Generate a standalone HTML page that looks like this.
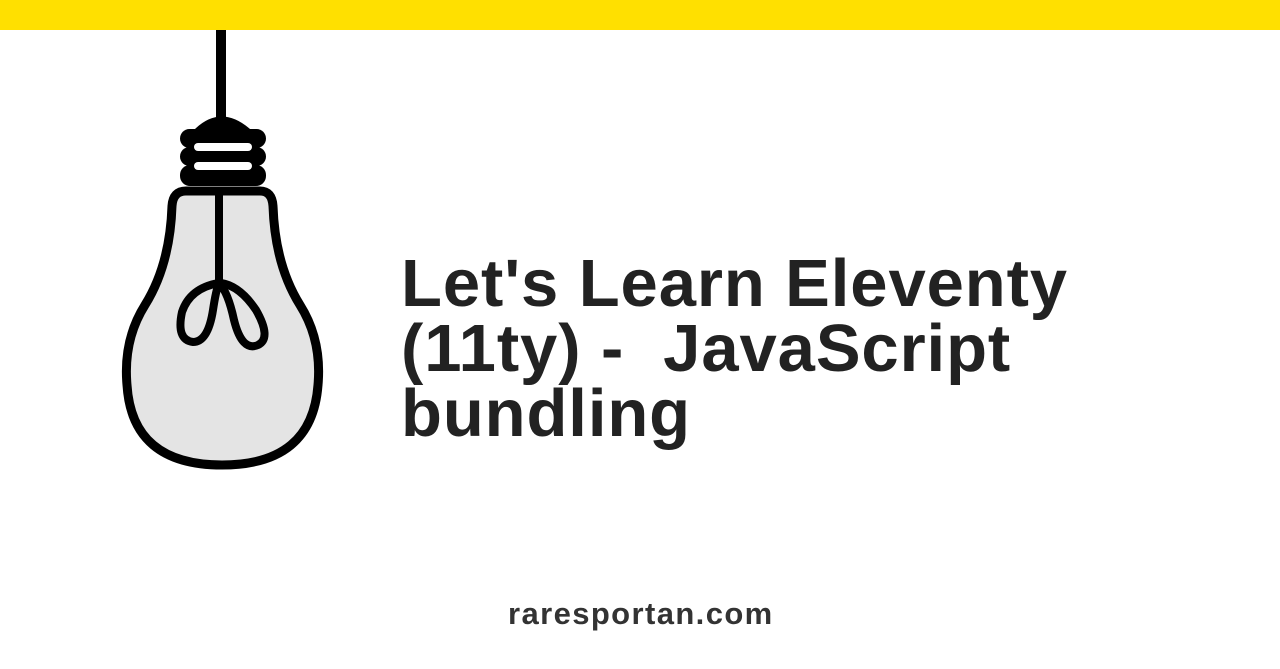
<!DOCTYPE html>
<html><head><meta charset="utf-8"><style>
html,body{margin:0;padding:0;width:1280px;height:669px;overflow:hidden;background:#fff;position:relative;font-family:"Liberation Sans",sans-serif}
.bar{position:absolute;left:0;top:0;width:1280px;height:30px;background:#ffe000}
.t{position:absolute;left:401px;top:251px;font-weight:bold;font-size:67px;line-height:65px;color:#222;white-space:pre;letter-spacing:0.9px}
.f{position:absolute;left:508px;top:596px;font-weight:bold;font-size:31px;color:#333;letter-spacing:1.4px}
svg{position:absolute;left:0;top:0}
</style></head><body>
<div class="bar"></div>
<svg width="400" height="500" viewBox="0 0 400 500">
<rect x="216" y="30" width="10" height="88" fill="#000"/>
<path d="M195 129 Q221 104 250 129 Z" fill="#000"/>
<g fill="#000">
<rect x="180" y="129" width="86" height="19" rx="9.5"/>
<rect x="180" y="147" width="86" height="19" rx="9.5"/>
<rect x="180" y="165" width="86" height="21" rx="10"/>
</g>
<g fill="#fff">
<rect x="194" y="143" width="58" height="8" rx="4"/>
<rect x="194" y="162" width="58" height="8" rx="4"/>
</g>
<path d="M186 191 L260 191 Q272 191 273 206 Q275 265 300 305 Q322 340 318 385 Q312 465 222 465 Q132 465 127 385 Q123 340 145 305 Q170 265 172 206 Q173 191 186 191 Z" fill="#e4e4e4" stroke="#000" stroke-width="9" stroke-linejoin="round"/>
<path d="M219 192 L219 283 Q190 288 182 312 Q176 340 193 342 Q208 342 213 310 Q216 290 219 283 Q228 292 234 320 Q242 352 258 345 Q272 338 256 310 Q240 286 221 283" fill="none" stroke="#000" stroke-width="8" stroke-linejoin="round"/>
</svg>
<div class="t">Let's Learn Eleventy
(11ty) -  JavaScript
bundling</div>
<div class="f">raresportan.com</div>
</body></html>
